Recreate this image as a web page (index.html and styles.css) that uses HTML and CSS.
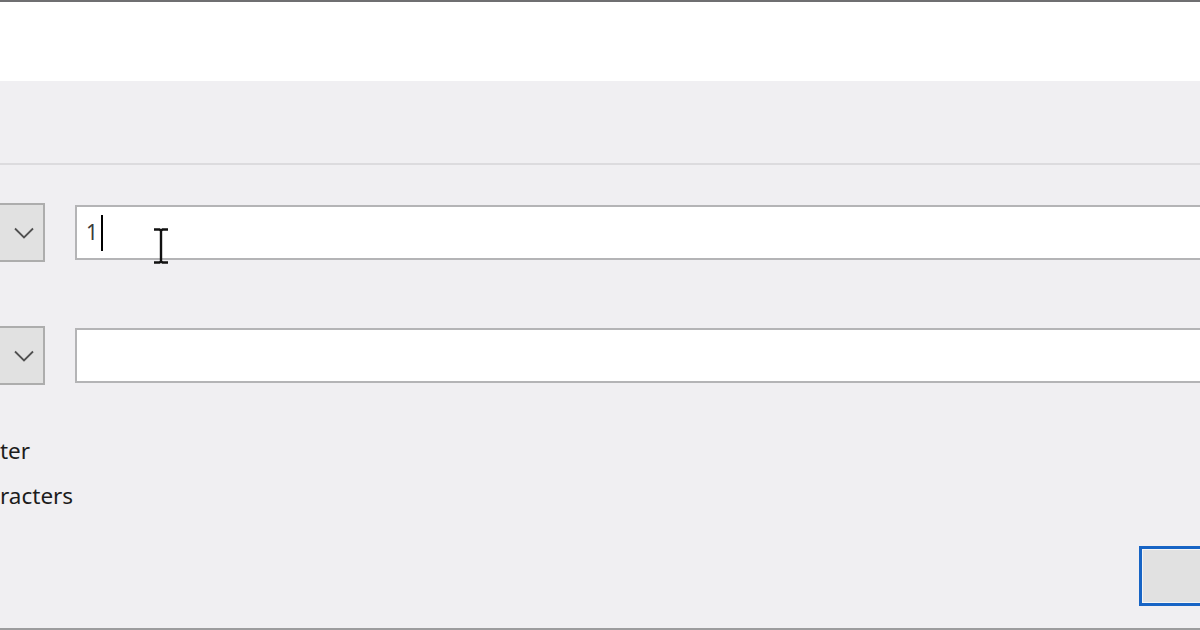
FILE: index.html
```html
<!DOCTYPE html>
<html lang="en">
<head>
<meta charset="utf-8">
<title>Custom AutoFilter</title>
<link rel="stylesheet" href="styles.css">
</head>
<body>
<div class="top"></div>
<div class="main">
  <div class="sep"></div>
  <div class="row row-first">
    <div class="combo">
      <svg class="chev" width="20" height="12" viewBox="0 0 20 12"><polyline points="1,1.5 10,10.5 19,1.5" fill="none" stroke="#505050" stroke-width="1.8"/></svg>
    </div>
    <div class="field">
      <span class="val">1</span><span class="caret"></span>
      <svg class="ibeam" width="18" height="36" viewBox="0 0 18 36"><path d="M2 1.5h5.5l1.5 1.2 1.5-1.2h5.5M9 2.5v31M2 34.5h5.5l1.5-1.2 1.5 1.2h5.5" fill="none" stroke="#111" stroke-width="2.4"/></svg>
    </div>
  </div>
  <div class="row row-second">
    <div class="combo">
      <svg class="chev" width="20" height="12" viewBox="0 0 20 12"><polyline points="1,1.5 10,10.5 19,1.5" fill="none" stroke="#505050" stroke-width="1.8"/></svg>
    </div>
    <div class="field"></div>
  </div>
  <div class="hints">
    <p class="hint">ter</p>
    <p class="hint">racters</p>
  </div>
  <div class="footer">
    <button class="btn" type="button"></button>
  </div>
</div>
</body>
</html>
```
FILE: styles.css
```css
html, body {
  margin: 0;
  padding: 0;
}
body {
  width: 1200px;
  height: 630px;
  overflow: hidden;
  background: #f0eff2;
  font-family: "Noto Sans", "Open Sans", sans-serif;
  color: #1c1c1c;
}
.top {
  height: 79px;
  border-top: 2px solid #6f6f71;
  background: #ffffff;
}
.main {
  height: 547px;
  border-bottom: 2px solid #9c9c9e;
  overflow: hidden;
}
.sep {
  margin-top: 82px;
  height: 2px;
  background: #dcdbde;
}
.row {
  display: flex;
  align-items: center;
  gap: 30px;
  height: 59px;
}
.row-first {
  margin-top: 38px;
}
.row-second {
  margin-top: 64px;
}
.combo {
  flex: none;
  width: 39px;
  height: 55px;
  border: 2px solid #adadad;
  border-left: none;
  background: #e1e1e1;
  display: flex;
  align-items: center;
  justify-content: center;
  padding-left: 4px;
  box-sizing: content-box;
}
.field {
  flex: none;
  position: relative;
  width: 1200px;
  height: 51px;
  border: 2px solid #b4b4b6;
  background: #ffffff;
  display: flex;
  align-items: center;
  padding-left: 9px;
}
.val {
  font-size: 21px;
  color: #3a3a3a;
  line-height: 1;
  margin-right: 3px;
}
.caret {
  width: 2px;
  height: 36px;
  background: #000;
}
.ibeam {
  position: absolute;
  left: 75px;
  top: 21px;
}
.hints {
  margin-top: 43px;
}
.hint {
  margin: 0;
  font-size: 22.5px;
  line-height: 45px;
  height: 45px;
  white-space: nowrap;
}
.footer {
  display: flex;
  padding-left: 1139px;
  margin-top: 28px;
}
.btn {
  flex: none;
  width: 120px;
  height: 60px;
  margin: 0;
  padding: 0;
  border: 3px solid #1764c5;
  background: #e1e1e1;
  box-shadow: inset 0 0 0 1px #f4f4f4;
}
```
